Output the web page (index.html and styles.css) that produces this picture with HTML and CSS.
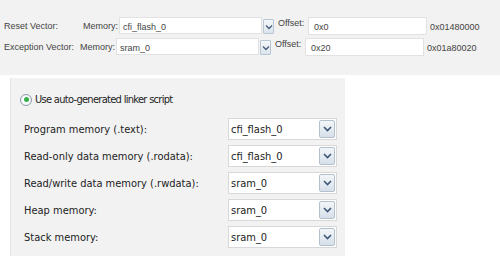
FILE: index.html
```html
<!DOCTYPE html>
<html lang="en">
<head>
    <meta charset="UTF-8">
    <title>Linker Settings</title>
    <link rel="stylesheet" href="styles.css">
</head>
<body>
    <div class="vectors">
        <div class="vec-row">
            <span class="vec-label reset">Reset Vector:</span>
            <span class="mem-label">Memory:</span>
            <div class="small-combo">
                <span class="small-field">cfi_flash_0</span>
                <span class="small-btn"><svg width="8" height="6" viewBox="0 0 8 6"><path d="M1 1.5 L4 4.5 L7 1.5" fill="none" stroke="#4a5f7a" stroke-width="1.4"/></svg></span>
            </div>
            <span class="off-label">Offset:</span>
            <span class="off-field">0x0</span>
            <span class="addr">0x01480000</span>
        </div>
        <div class="vec-row">
            <span class="vec-label exc">Exception Vector:</span>
            <span class="mem-label">Memory:</span>
            <div class="small-combo">
                <span class="small-field">sram_0</span>
                <span class="small-btn"><svg width="8" height="6" viewBox="0 0 8 6"><path d="M1 1.5 L4 4.5 L7 1.5" fill="none" stroke="#4a5f7a" stroke-width="1.4"/></svg></span>
            </div>
            <span class="off-label">Offset:</span>
            <span class="off-field">0x20</span>
            <span class="addr">0x01a80020</span>
        </div>
    </div>

    <div class="panel">
        <label class="radio-row">
            <span class="radio"><span class="dot"></span></span>
            <span class="radio-text">Use auto-generated linker script</span>
        </label>

        <div class="mem-row">
            <span class="mem-name">Program memory (.text):</span>
            <div class="combo"><span class="combo-text">cfi_flash_0</span><span class="combo-btn"><svg width="9" height="6" viewBox="0 0 9 6"><path d="M1 1 L4.5 4.5 L8 1" fill="none" stroke="#3d5677" stroke-width="1.6"/></svg></span></div>
        </div>
        <div class="mem-row">
            <span class="mem-name">Read-only data memory (.rodata):</span>
            <div class="combo"><span class="combo-text">cfi_flash_0</span><span class="combo-btn"><svg width="9" height="6" viewBox="0 0 9 6"><path d="M1 1 L4.5 4.5 L8 1" fill="none" stroke="#3d5677" stroke-width="1.6"/></svg></span></div>
        </div>
        <div class="mem-row">
            <span class="mem-name">Read/write data memory (.rwdata):</span>
            <div class="combo"><span class="combo-text">sram_0</span><span class="combo-btn"><svg width="9" height="6" viewBox="0 0 9 6"><path d="M1 1 L4.5 4.5 L8 1" fill="none" stroke="#3d5677" stroke-width="1.6"/></svg></span></div>
        </div>
        <div class="mem-row">
            <span class="mem-name">Heap memory:</span>
            <div class="combo"><span class="combo-text">sram_0</span><span class="combo-btn"><svg width="9" height="6" viewBox="0 0 9 6"><path d="M1 1 L4.5 4.5 L8 1" fill="none" stroke="#3d5677" stroke-width="1.6"/></svg></span></div>
        </div>
        <div class="mem-row">
            <span class="mem-name">Stack memory:</span>
            <div class="combo"><span class="combo-text">sram_0</span><span class="combo-btn"><svg width="9" height="6" viewBox="0 0 9 6"><path d="M1 1 L4.5 4.5 L8 1" fill="none" stroke="#3d5677" stroke-width="1.6"/></svg></span></div>
        </div>
    </div>
</body>
</html>
```

FILE: styles.css
```css
body {
    margin: 0;
    background: #ffffff;
    font-family: "Liberation Sans", Arial, sans-serif;
    overflow: hidden;
}

/* top strip with reset / exception vectors */
.vectors {
    background: #f2f2f2;
    height: 75px;
    padding: 17px 0 0 4px;
    box-sizing: border-box;
    display: flex;
    flex-direction: column;
    gap: 4px;
    font-size: 9px;
    color: #444;
}
.vec-row {
    display: flex;
    align-items: center;
    height: 17px;
}
.vec-label.reset {
    width: 79px;
}
.vec-label.exc {
    width: 76px;
}
.mem-label {
    width: 36px;
}
.small-combo {
    display: flex;
    align-items: flex-end;
    height: 17px;
}
.small-field {
    width: 143px;
    height: 17px;
    background: #fff;
    border: 1px solid #e2e2e2;
    box-sizing: border-box;
    padding: 4px 0 0 3px;
}
.small-btn {
    width: 11px;
    height: 15px;
    margin: 0 0 0 1px;
    border: 1px solid #b9c6d4;
    border-radius: 1px;
    background: linear-gradient(#f4f7fa, #dbe4ee);
    display: flex;
    align-items: center;
    justify-content: center;
    box-sizing: border-box;
}
.off-label {
    margin-left: 4px;
    width: 30px;
    align-self: flex-start;
    padding-top: 1px;
}
.off-field {
    width: 119px;
    height: 18px;
    background: #fff;
    border: 1px solid #e2e2e2;
    box-sizing: border-box;
    padding: 4px 0 0 5px;
}
.addr {
    margin-left: 3px;
    padding-top: 3px;
}

/* linker script panel */
.panel {
    margin: 3px 0 0 10px;
    width: 335px;
    height: 180px;
    background: #f2f2f2;
    border-left: 1px solid #e4e4e4;
    box-sizing: border-box;
    padding: 15px 0 0 9px;
    font-family: "DejaVu Sans Condensed", "DejaVu Sans", sans-serif;
    font-size: 11px;
    color: #222;
}
.radio-row {
    display: flex;
    align-items: center;
    gap: 3px;
    height: 13px;
    margin-bottom: 12px;
}
.radio-text {
    letter-spacing: -0.7px;
}
.radio {
    width: 12px;
    height: 12px;
    border-radius: 50%;
    border: 1px solid #8a9aaa;
    background: radial-gradient(circle, #ffffff 40%, #e6ebef 100%);
    box-sizing: border-box;
    display: flex;
    align-items: center;
    justify-content: center;
}
.dot {
    width: 5px;
    height: 5px;
    border-radius: 50%;
    background: #35b04a;
}
.mem-row {
    display: flex;
    align-items: center;
    height: 22px;
    margin-bottom: 5px;
    padding-left: 4px;
}
.mem-name {
    width: 204px;
}
.combo {
    width: 109px;
    height: 22px;
    background: #fff;
    border: 1px solid #d8d8d8;
    box-sizing: border-box;
    display: flex;
    align-items: center;
    justify-content: space-between;
    padding: 0 1px 0 2px;
}
.combo-btn {
    width: 16px;
    height: 18px;
    border: 1px solid #b3c0ce;
    border-radius: 2px;
    background: linear-gradient(#f3f6f9, #d6dfe9);
    box-sizing: border-box;
    display: flex;
    align-items: center;
    justify-content: center;
}
```
